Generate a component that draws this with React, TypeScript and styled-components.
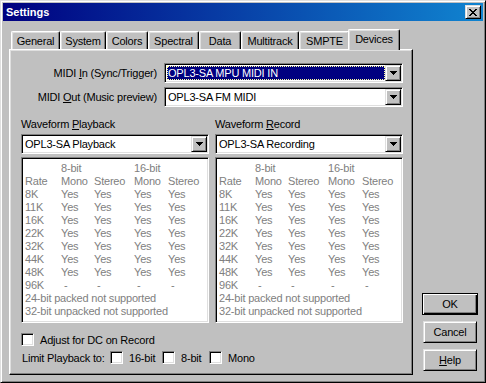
import React from 'react';
import styled, { createGlobalStyle, css } from 'styled-components';

const Global = createGlobalStyle`
  html, body { margin: 0; padding: 0; background: #c0c0c0; }
  body { font-family: "Liberation Sans", Arial, sans-serif; font-size: 11px; color: #000; letter-spacing: -0.2px; }
  * { box-sizing: border-box; }
`;

const raised = css`
  border: 1px solid;
  border-color: #dfdfdf #000 #000 #dfdfdf;
  box-shadow: inset 1px 1px #fff, inset -1px -1px #808080;
`;

const sunken = css`
  border: 1px solid;
  border-color: #808080 #fff #fff #808080;
  box-shadow: inset 1px 1px #000, inset -1px -1px #dfdfdf;
`;

const Window = styled.div`
  width: 486px;
  height: 383px;
  background: #c0c0c0;
  ${raised};
  padding: 2px;
  display: flex;
  flex-direction: column;
`;

const TitleBar = styled.div`
  height: 18px;
  flex: none;
  background: linear-gradient(to right, #000080, #1084d0);
  display: flex;
  align-items: center;
  justify-content: space-between;
  padding: 0 2px 0 3px;
`;

const TitleText = styled.span`
  color: #fff;
  font-weight: bold;
  font-size: 11px;
  letter-spacing: 0;
`;

const CloseButton = styled.div`
  width: 16px;
  height: 14px;
  background: #c0c0c0;
  ${raised};
  display: flex;
  align-items: center;
  justify-content: center;
  padding-right: 1px;
`;

const Body = styled.div`
  flex: 1;
  display: flex;
  padding: 8px 0 0 6px;
`;

const TabArea = styled.div`
  width: 404px;
  display: flex;
  flex-direction: column;
`;

const TabStrip = styled.div`
  height: 20px;
  display: flex;
  align-items: flex-end;
  padding-left: 2px;
`;

const Tab = styled.div<{ $w: number; $active?: boolean }>`
  position: relative;
  width: ${(p) => p.$w}px;
  height: 18px;
  flex: none;
  background: #c0c0c0;
  border-top: 1px solid #fff;
  border-left: 1px solid #fff;
  border-right: 1px solid #000;
  border-radius: 2px 2px 0 0;
  box-shadow: inset -1px 0 #808080, inset 1px 1px #dfdfdf;
  display: flex;
  align-items: center;
  justify-content: center;
  padding-top: 1px;
  ${(p) =>
    p.$active &&
    css`
      z-index: 2;
      width: ${p.$w + 4}px;
      height: 21px;
      margin: 0 -2px -1px -2px;
      padding-top: 0;
      padding-bottom: 3px;
    `}
`;

const Panel = styled.div`
  height: 326px;
  position: relative;
  z-index: 1;
  border: 1px solid;
  border-color: #fff #000 #000 #fff;
  box-shadow: inset -1px -1px #808080, inset 1px 1px #dfdfdf;
  padding: 13px 9px 0 11px;
  display: flex;
  flex-direction: column;
`;

const MidiRow = styled.div<{ $gap?: number }>`
  display: flex;
  align-items: center;
  gap: 7px;
  margin-top: ${(p) => p.$gap ?? 0}px;
`;

const MidiLabel = styled.span`
  width: 136px;
  text-align: right;
  white-space: nowrap;
`;

const Combo = styled.div`
  flex: 1;
  height: 20px;
  background: #fff;
  ${sunken};
  padding: 1px;
  display: flex;
`;

const ComboValue = styled.div<{ $selected?: boolean }>`
  flex: 1;
  line-height: 16px;
  padding-left: 2px;
  white-space: nowrap;
  overflow: hidden;
  ${(p) =>
    p.$selected &&
    css`
      margin: 1px 0 1px 1px;
      padding-left: 1px;
      line-height: 14px;
      background: #000080;
      color: #fff;
      outline: 1px dotted #ffff9f;
      outline-offset: -1px;
    `}
`;

const ArrowButton = styled.div`
  width: 16px;
  height: 16px;
  flex: none;
  background: #c0c0c0;
  ${raised};
  display: flex;
  align-items: center;
  justify-content: center;
`;

const WaveGrid = styled.div`
  display: grid;
  grid-template-columns: 188px 188px;
  column-gap: 6px;
  margin-top: 11px;
`;

const WaveColumn = styled.div`
  display: flex;
  flex-direction: column;
`;

const WaveLabel = styled.span`
  height: 13px;
  line-height: 13px;
  margin-bottom: 3px;
`;

const InfoBox = styled.div`
  margin-top: 3px;
  height: 166px;
  background: #fff;
  ${sunken};
  padding: 4px 0 0 3px;
  color: #808080;
  display: grid;
  grid-template-columns: 36px 33px 40px 34px auto;
  grid-auto-rows: 13px;
  line-height: 13px;
  align-content: start;
`;

const Cell = styled.span<{ $dash?: boolean; $full?: boolean }>`
  white-space: nowrap;
  padding-left: ${(p) => (p.$dash ? 3 : 0)}px;
  ${(p) => p.$full && css`grid-column: 1 / -1;`}
`;

const CheckRow = styled.div<{ $top: number }>`
  display: flex;
  align-items: center;
  height: 13px;
  margin-top: ${(p) => p.$top}px;
`;

const CheckBox = styled.span`
  width: 13px;
  height: 13px;
  flex: none;
  background: #fff;
  ${sunken};
`;

const CheckItem = styled.label<{ $w?: number }>`
  display: flex;
  align-items: center;
  gap: 6px;
  ${(p) => p.$w && css`width: ${p.$w}px;`}
  flex: none;
`;

const RowLabel = styled.span<{ $w: number }>`
  width: ${(p) => p.$w}px;
  padding-left: 1px;
  flex: none;
  white-space: nowrap;
`;

const ButtonColumn = styled.div`
  margin-left: 9px;
  width: 56px;
  display: flex;
  flex-direction: column;
  justify-content: flex-end;
  gap: 6px;
  padding-bottom: 9px;
`;

const Button = styled.div<{ $default?: boolean }>`
  height: 22px;
  margin: 0 1px;
  background: #c0c0c0;
  ${raised};
  display: flex;
  align-items: center;
  justify-content: center;
  ${(p) =>
    p.$default &&
    css`
      margin: 0;
      border: 1px solid #000;
      box-shadow: inset 1px 1px #fff, inset -1px -1px #000, inset -2px -2px #808080;
    `}
`;

const CloseGlyph = () => (
  <svg width="8" height="7" viewBox="0 0 8 7" shapeRendering="crispEdges">
    <path
      d="M0 0h2v1H0zM6 0h2v1H6zM1 1h2v1H1zM5 1h2v1H5zM2 2h4v1H2zM3 3h2v1H3zM2 4h4v1H2zM1 5h2v1H1zM5 5h2v1H5zM0 6h2v1H0zM6 6h2v1H6z"
      fill="#000"
    />
  </svg>
);

const DownArrow = () => (
  <svg width="7" height="4" viewBox="0 0 7 4" shapeRendering="crispEdges">
    <path d="M0 0h7v1H0zM1 1h5v1H1zM2 2h3v1H2zM3 3h1v1H3z" fill="#000" />
  </svg>
);

const ComboBox = ({ value, selected }: { value: string; selected?: boolean }) => (
  <Combo>
    <ComboValue $selected={selected}>{value}</ComboValue>
    <ArrowButton>
      <DownArrow />
    </ArrowButton>
  </Combo>
);

const tabs: [string, number][] = [
  ['General', 49],
  ['System', 46],
  ['Colors', 42],
  ['Spectral', 51],
  ['Data', 42],
  ['Multitrack', 58],
  ['SMPTE', 51],
  ['Devices', 48],
];

const rates = ['8K', '11K', '16K', '22K', '32K', '44K', '48K'];

const Info = () => (
  <InfoBox>
    <Cell />
    <Cell>8-bit</Cell>
    <Cell />
    <Cell>16-bit</Cell>
    <Cell />
    <Cell>Rate</Cell>
    <Cell>Mono</Cell>
    <Cell>Stereo</Cell>
    <Cell>Mono</Cell>
    <Cell>Stereo</Cell>
    {rates.map((r) => (
      <React.Fragment key={r}>
        <Cell>{r}</Cell>
        <Cell>Yes</Cell>
        <Cell>Yes</Cell>
        <Cell>Yes</Cell>
        <Cell>Yes</Cell>
      </React.Fragment>
    ))}
    <Cell>96K</Cell>
    <Cell $dash>-</Cell>
    <Cell $dash>-</Cell>
    <Cell $dash>-</Cell>
    <Cell $dash>-</Cell>
    <Cell $full>24-bit packed not supported</Cell>
    <Cell $full>32-bit unpacked not supported</Cell>
  </InfoBox>
);

export default function App() {
  return (
    <>
      <Global />
      <Window>
        <TitleBar>
          <TitleText>Settings</TitleText>
          <CloseButton>
            <CloseGlyph />
          </CloseButton>
        </TitleBar>
        <Body>
          <TabArea>
            <TabStrip>
              {tabs.map(([name, w]) => (
                <Tab key={name} $w={w} $active={name === 'Devices'}>
                  {name}
                </Tab>
              ))}
            </TabStrip>
            <Panel>
              <MidiRow>
                <MidiLabel>
                  MIDI <u>I</u>n (Sync/Trigger)
                </MidiLabel>
                <ComboBox value="OPL3-SA MPU MIDI IN" selected />
              </MidiRow>
              <MidiRow $gap={4}>
                <MidiLabel>
                  MIDI <u>O</u>ut (Music preview)
                </MidiLabel>
                <ComboBox value="OPL3-SA FM MIDI" />
              </MidiRow>
              <WaveGrid>
                <WaveColumn>
                  <WaveLabel>
                    Waveform <u>P</u>layback
                  </WaveLabel>
                  <ComboBox value="OPL3-SA Playback" />
                  <Info />
                </WaveColumn>
                <WaveColumn>
                  <WaveLabel>
                    Waveform <u>R</u>ecord
                  </WaveLabel>
                  <ComboBox value="OPL3-SA Recording" />
                  <Info />
                </WaveColumn>
              </WaveGrid>
              <CheckRow $top={10}>
                <CheckItem>
                  <CheckBox />
                  Adjust for DC on Record
                </CheckItem>
              </CheckRow>
              <CheckRow $top={5}>
                <RowLabel $w={89}>Limit Playback to:</RowLabel>
                <CheckItem $w={52}>
                  <CheckBox />
                  16-bit
                </CheckItem>
                <CheckItem $w={47}>
                  <CheckBox />
                  8-bit
                </CheckItem>
                <CheckItem>
                  <CheckBox />
                  Mono
                </CheckItem>
              </CheckRow>
            </Panel>
          </TabArea>
          <ButtonColumn>
            <Button $default>OK</Button>
            <Button>Cancel</Button>
            <Button>
              <span>
                <u>H</u>elp
              </span>
            </Button>
          </ButtonColumn>
        </Body>
      </Window>
    </>
  );
}
